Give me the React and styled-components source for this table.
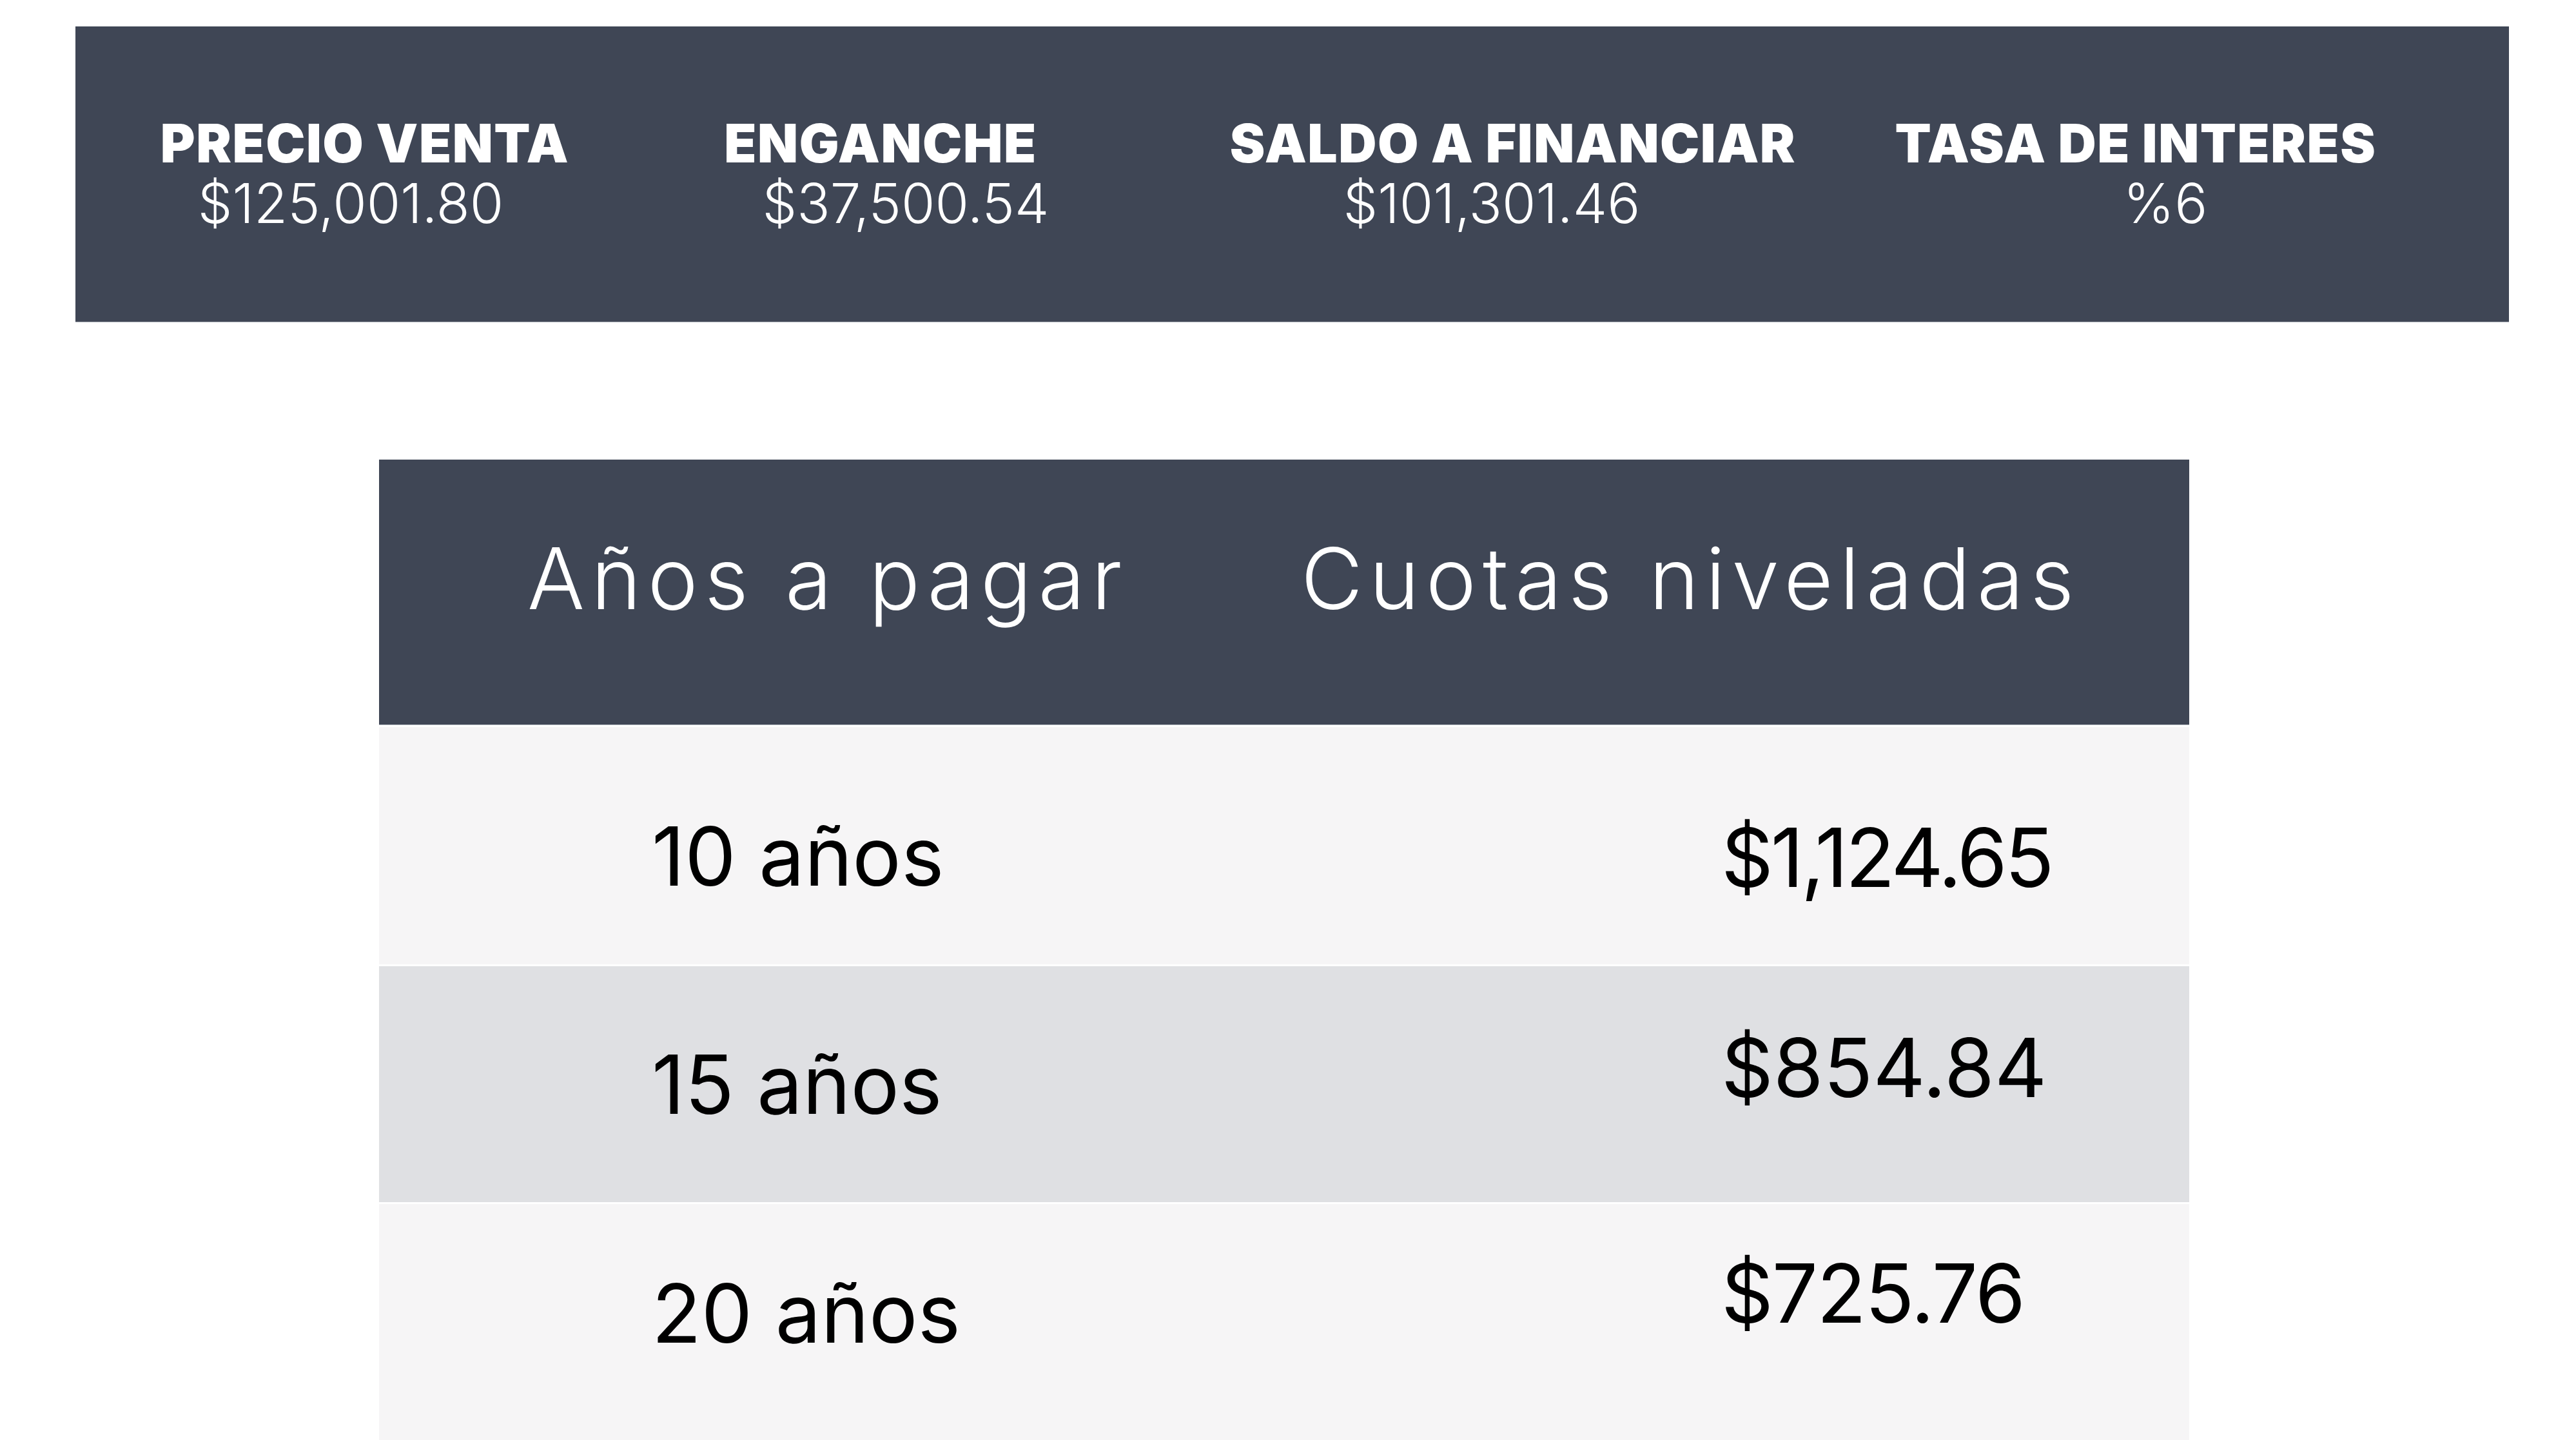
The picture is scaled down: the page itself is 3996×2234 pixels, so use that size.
import React from 'react';
import styled, { createGlobalStyle } from 'styled-components';

const GlobalStyle = createGlobalStyle`
  html, body {
    margin: 0;
    padding: 0;
    background: #ffffff;
  }
  body {
    font-family: Inter, "Open Sans", sans-serif;
  }
`;

const Page = styled.div`
  width: 3996px;
  height: 2234px;
  overflow: hidden;
  padding-top: 41px;
  box-sizing: border-box;
`;

const SummaryBar = styled.section`
  margin: 0 104px 0 117px;
  height: 459px;
  box-sizing: border-box;
  background: #3f4655;
  border-bottom: 1px solid #a3a8b0;
  padding: 141px 0 0 49px;
  display: grid;
  grid-template-columns: 800px 800px 1162px 770px;
  align-items: start;
`;

const SummaryItem = styled.div`
  display: flex;
  flex-direction: column;
  align-items: center;
  gap: 9px;
  color: #ffffff;
`;

const SummaryLabel = styled.div`
  font-size: 82px;
  line-height: 1;
  font-weight: 900;
  letter-spacing: 1.5px;
  white-space: nowrap;
`;

const SummaryValue = styled.div`
  font-size: 85px;
  line-height: 1;
  font-weight: 300;
  white-space: nowrap;
  padding-left: ${p => (p.$shift > 0 ? p.$shift * 2 : 0)}px;
  padding-right: ${p => (p.$shift < 0 ? -p.$shift * 2 : 0)}px;
`;

const Table = styled.section`
  margin: 213px 0 0 588px;
  width: 2808px;
  display: flex;
  flex-direction: column;
  gap: 3px;
  background: #ffffff;
`;

const HeaderRow = styled.div`
  height: 412px;
  box-sizing: border-box;
  background: #3f4655;
  border-bottom: 1px solid #b9bdc5;
  display: grid;
  grid-template-columns: 1200px 1fr;
`;

const HeaderCell = styled.div`
  padding: 118px 0 0 ${p => p.$indent}px;
  font-size: 132px;
  line-height: 1;
  font-weight: 300;
  letter-spacing: 10px;
  color: #ffffff;
  white-space: nowrap;
`;

const BodyRow = styled.div`
  height: ${p => p.$height}px;
  background: ${p => (p.$shaded ? '#dfe0e3' : '#f6f5f6')};
  display: grid;
  grid-template-columns: 1200px 1fr;
`;

const BodyCell = styled.div`
  padding: ${p => p.$top}px 0 0 ${p => p.$indent}px;
  font-size: 126px;
  line-height: 1;
  font-weight: 400;
  letter-spacing: ${p => p.$tracking || 0}px;
  color: #000000;
  white-space: nowrap;
`;

const summary = [
  { label: 'PRECIO VENTA', value: '$125,001.80', shift: -22 },
  { label: 'ENGANCHE', value: '$37,500.54', shift: 39 },
  { label: 'SALDO A FINANCIAR', value: '$101,301.46', shift: -33 },
  { label: 'TASA DE INTERES', value: '%6', shift: 46 },
];

const rows = [
  { years: '10 años', payment: '$1,124.65', topL: 137, topR: 139, height: 368, tracking: -4 },
  { years: '15 años', payment: '$854.84', topL: 120, topR: 94, height: 366, shaded: true, tracking: 0 },
  { years: '20 años', payment: '$725.76', topL: 106, topR: 75, height: 368, tracking: -2 },
];

export default function App() {
  return (
    <>
      <GlobalStyle />
      <Page>
        <SummaryBar>
          {summary.map(item => (
            <SummaryItem key={item.label}>
              <SummaryLabel>{item.label}</SummaryLabel>
              <SummaryValue $shift={item.shift}>{item.value}</SummaryValue>
            </SummaryItem>
          ))}
        </SummaryBar>

        <Table>
          <HeaderRow>
            <HeaderCell $indent={230}>Años a pagar</HeaderCell>
            <HeaderCell $indent={230}>Cuotas niveladas</HeaderCell>
          </HeaderRow>
          {rows.map(row => (
            <BodyRow key={row.years} $shaded={row.shaded} $height={row.height}>
              <BodyCell $indent={423} $top={row.topL}>{row.years}</BodyCell>
              <BodyCell $indent={882} $top={row.topR} $tracking={row.tracking}>
                {row.payment}
              </BodyCell>
            </BodyRow>
          ))}
        </Table>
      </Page>
    </>
  );
}
